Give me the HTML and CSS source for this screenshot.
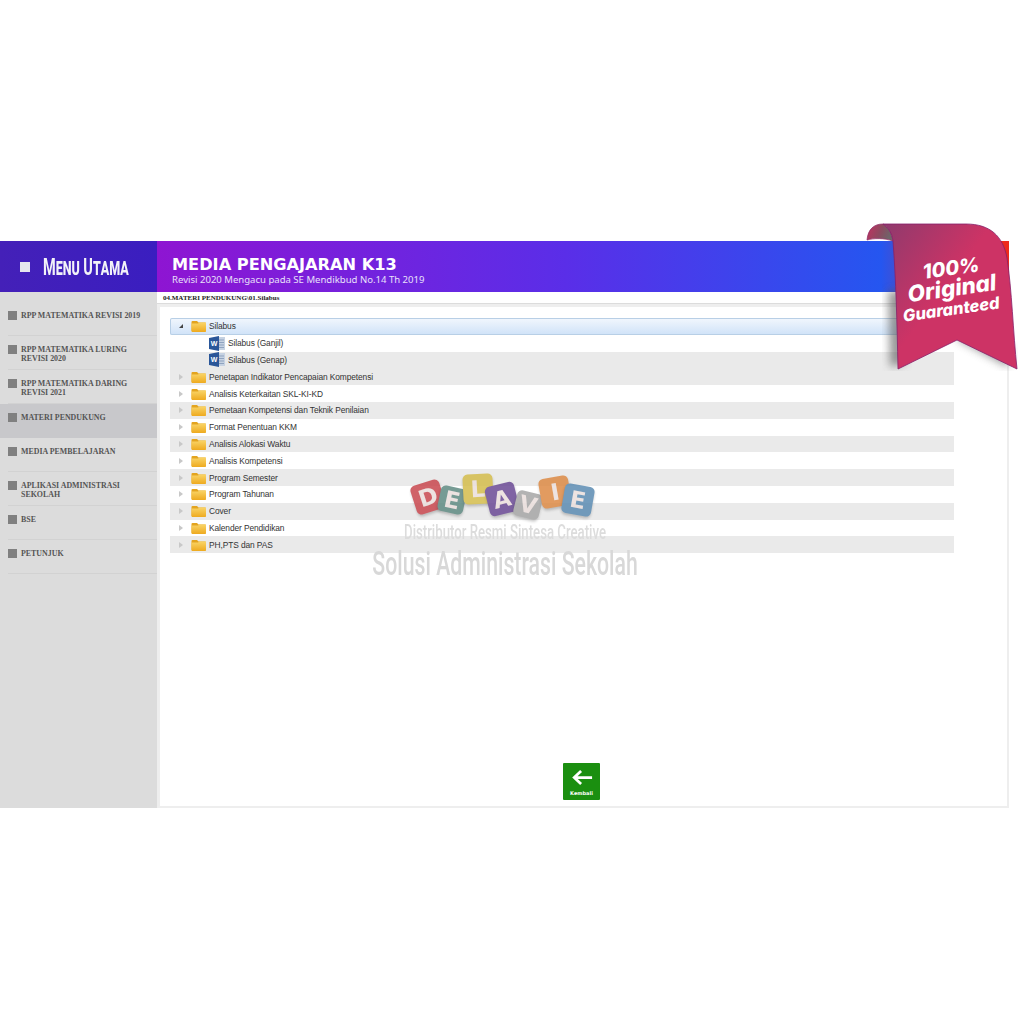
FILE: index.html
```html
<!DOCTYPE html>
<html lang="en">
<head>
  <meta charset="UTF-8" />
  <title>Media Pengajaran K13</title>
  <link rel="stylesheet" href="styles.css">
</head>
<body>
  <div class="app">
    <div class="sidebar">
      <div class="menu-title"><span class="menu-square"></span><span class="menu-text">Menu Utama</span></div>
      <div class="menu-list">
        <div class="menu-item"><span class="bullet"></span><span>RPP MATEMATIKA REVISI 2019</span></div>
        <div class="menu-item"><span class="bullet"></span><span>RPP MATEMATIKA LURING REVISI 2020</span></div>
        <div class="menu-item"><span class="bullet"></span><span>RPP MATEMATIKA DARING REVISI 2021</span></div>
        <div class="menu-item active"><span class="bullet"></span><span>MATERI PENDUKUNG</span></div>
        <div class="menu-item"><span class="bullet"></span><span>MEDIA PEMBELAJARAN</span></div>
        <div class="menu-item"><span class="bullet"></span><span>APLIKASI ADMINISTRASI SEKOLAH</span></div>
        <div class="menu-item"><span class="bullet"></span><span>BSE</span></div>
        <div class="menu-item"><span class="bullet"></span><span>PETUNJUK</span></div>
      </div>
    </div>

    <div class="main">
      <div class="header">
        <h1>MEDIA PENGAJARAN K13</h1>
        <p>Revisi 2020 Mengacu pada SE Mendikbud No.14 Th 2019</p>
      </div>
      <div class="path">04.MATERI PENDUKUNG\01.Silabus</div>
      <div class="content">
        <div class="tree">
          <div class="row selected"><span class="arrow open"></span><svg class="folder" viewBox="0 0 15 12"><use href="#folder" /></svg><span>Silabus</span></div>
          <div class="row file"><svg class="word" viewBox="0 0 16 15"><use href="#word" /></svg><span>Silabus (Ganjil)</span></div>
          <div class="row file grey"><svg class="word" viewBox="0 0 16 15"><use href="#word" /></svg><span>Silabus (Genap)</span></div>
          <div class="row grey"><span class="arrow"></span><svg class="folder" viewBox="0 0 15 12"><use href="#folder" /></svg><span>Penetapan Indikator Pencapaian Kompetensi</span></div>
          <div class="row"><span class="arrow"></span><svg class="folder" viewBox="0 0 15 12"><use href="#folder" /></svg><span>Analisis Keterkaitan SKL-KI-KD</span></div>
          <div class="row grey"><span class="arrow"></span><svg class="folder" viewBox="0 0 15 12"><use href="#folder" /></svg><span>Pemetaan Kompetensi dan Teknik Penilaian</span></div>
          <div class="row"><span class="arrow"></span><svg class="folder" viewBox="0 0 15 12"><use href="#folder" /></svg><span>Format Penentuan KKM</span></div>
          <div class="row grey"><span class="arrow"></span><svg class="folder" viewBox="0 0 15 12"><use href="#folder" /></svg><span>Analisis Alokasi Waktu</span></div>
          <div class="row"><span class="arrow"></span><svg class="folder" viewBox="0 0 15 12"><use href="#folder" /></svg><span>Analisis Kompetensi</span></div>
          <div class="row grey"><span class="arrow"></span><svg class="folder" viewBox="0 0 15 12"><use href="#folder" /></svg><span>Program Semester</span></div>
          <div class="row"><span class="arrow"></span><svg class="folder" viewBox="0 0 15 12"><use href="#folder" /></svg><span>Program Tahunan</span></div>
          <div class="row grey"><span class="arrow"></span><svg class="folder" viewBox="0 0 15 12"><use href="#folder" /></svg><span>Cover</span></div>
          <div class="row"><span class="arrow"></span><svg class="folder" viewBox="0 0 15 12"><use href="#folder" /></svg><span>Kalender Pendidikan</span></div>
          <div class="row grey"><span class="arrow"></span><svg class="folder" viewBox="0 0 15 12"><use href="#folder" /></svg><span>PH,PTS dan PAS</span></div>
        </div>
        <div class="back-box">
          <div class="back-btn">
            <svg class="back-arrow" viewBox="0 0 24 18"><path d="M11 2 L3.5 9 L11 16 M4 9 H23" /></svg>
            <span>Kembali</span>
          </div>
        </div>
      </div>
    </div>

    <!-- watermark over the tree -->
    <div class="watermark">
      <div class="blocks">
        <span class="block b1">D</span>
        <span class="block b2">E</span>
        <span class="block b3">L</span>
        <span class="block b4">A</span>
        <span class="block b5">V</span>
        <span class="block b6">I</span>
        <span class="block b7">E</span>
      </div>
      <div class="wm-line1">Distributor Resmi Sintesa Creative</div>
      <div class="wm-line2">Solusi Administrasi Sekolah</div>
    </div>

    <!-- ribbon -->
    <svg class="ribbon" viewBox="0 0 152 150">
      <defs>
        <filter id="soft" x="-30%" y="-30%" width="160%" height="160%"><feGaussianBlur stdDeviation="4" /></filter>
        <linearGradient id="fold" x1="0" y1="0" x2="1" y2="0.3">
          <stop offset="0" stop-color="#c4305f" />
          <stop offset="0.6" stop-color="#8c4a60" />
          <stop offset="1" stop-color="#6f6469" />
        </linearGradient>
        <linearGradient id="shine" x1="0" y1="0" x2="0.5" y2="0.4">
          <stop offset="0" stop-color="#8f3a6d" />
          <stop offset="1" stop-color="#cd3365" />
        </linearGradient>
      </defs>
      <path d="M22 70 L24 146 L40 142 L40 70 Z" fill="#555" opacity="0.6" filter="url(#soft)" />
      <path d="M91 118 L142 146 L146 128 L96 106 Z" fill="#555" opacity="0.6" filter="url(#soft)" />
      <path d="M1 19 C2 8 8 3 17 3 C22 6 26 12 27 20 C18 17 8 17 1 19 Z" fill="url(#fold)" stroke="#8d2463" stroke-width="0.7" />
      <path d="M17 3 C22 6 26 12 27 20 C30 60 31 100 32 148 L91 119 L151 148 C147 110 146 70 141 37 C137 15 124 3 100 3 Z" fill="url(#shine)" stroke="#86206a" stroke-width="0.8" />
      <g class="ribbon-text">
        <text x="86" y="54" text-anchor="middle" font-size="20" transform="rotate(-8 86 54)">100%</text>
        <text x="87" y="75" text-anchor="middle" font-size="22.5" transform="rotate(-8 87 75)">Original</text>
        <text x="86" y="94" text-anchor="middle" font-size="16.5" transform="rotate(-8 86 94)">Guaranteed</text>
      </g>
    </svg>
  </div>

  <svg class="defs" width="0" height="0">
    <defs>
      <linearGradient id="folderFill" x1="0" y1="0" x2="0" y2="1">
        <stop offset="0" stop-color="#f9d467" />
        <stop offset="1" stop-color="#eeaa1f" />
      </linearGradient>
      <g id="folder">
        <path d="M0.5 2 Q0.5 1 1.5 1 H6 L7.5 2.5 H14 Q15 2.5 15 3.5 V10.5 Q15 12 13.5 12 H2 Q0.5 12 0.5 10.5 Z" fill="#e3a41f" />
        <path d="M0.5 3.6 L7 3.6 L8.5 2.6 H15 V10.5 Q15 12 13.5 12 H2 Q0.5 12 0.5 10.5 Z" fill="url(#folderFill)" />
      </g>
      <g id="word">
        <rect x="5" y="1" width="11" height="13" fill="#c6d2e2" />
        <path d="M9 4 H15 M9 6.5 H15 M9 9 H15 M9 11.5 H15" stroke="#8fa3c0" stroke-width="1" />
        <path d="M0 2 L10 0 V15 L0 13 Z" fill="#2a5699" />
        <text x="5" y="10" text-anchor="middle" font-size="7" font-weight="700" fill="#fff" font-family="Liberation Sans, sans-serif">W</text>
      </g>
    </defs>
  </svg>
</body>
</html>
```

FILE: styles.css
```css
* {
  margin: 0;
  padding: 0;
  box-sizing: border-box;
}
body {
  background: white;
  padding-top: 241px;
  font-family: 'Noto Sans', sans-serif;
}
.defs {
  position: absolute;
}
.app {
  position: relative;
  display: flex;
  width: 1024px;
  height: 567px;
}

/* left menu */
.sidebar {
  width: 157px;
  background: #dcdcdc;
  flex-shrink: 0;
}
.menu-title {
  display: flex;
  align-items: center;
  height: 51px;
  padding-left: 20px;
  gap: 13px;
  background: linear-gradient(90deg, #4420b8, #3a1ec0);
}
.menu-square {
  width: 10px;
  height: 10px;
  flex-shrink: 0;
  background: #e6e6ee;
}
.menu-text {
  display: inline-block;
  color: #f2f2f8;
  font-family: 'Roboto', sans-serif;
  font-size: 24px;
  font-weight: 700;
  font-variant: small-caps;
  white-space: nowrap;
  transform: scaleX(0.605);
  transform-origin: left center;
}
.menu-list {
  padding-top: 10px;
}
.menu-item {
  display: flex;
  align-items: flex-start;
  gap: 4px;
  height: 34px;
  padding: 9px 8px 0 8px;
  font-family: 'Liberation Serif', serif;
  font-size: 7.9px;
  font-weight: 700;
  line-height: 9.4px;
  color: #555;
  position: relative;
}
.menu-item:not(.active)::after {
  content: "";
  position: absolute;
  left: 8px;
  right: 0;
  bottom: 0;
  height: 1px;
  background: #d2d2d2;
}
.menu-item.active {
  background: #c8c8cb;
}
.bullet {
  width: 9px;
  height: 9px;
  flex-shrink: 0;
  background: #808080;
}

/* right side */
.main {
  flex: 1;
  display: flex;
  flex-direction: column;
  margin-right: 15px;
  background: #eeeeee;
}
.header {
  height: 51px;
  padding: 14px 0 0 15px;
  color: white;
  background: linear-gradient(90deg, #8e15d2 0%, #5a2ee8 48%, #2556f0 85%, #ee2a1c 99%);
}
.header h1 {
  font-family: 'DejaVu Sans', sans-serif;
  font-size: 16.2px;
  font-weight: 700;
  line-height: 19px;
}
.header p {
  font-size: 9.55px;
  line-height: 11px;
  color: #e8e0fa;
}
.path {
  height: 12px;
  padding-left: 6px;
  background: white;
  border-bottom: 1px solid #dcdcdc;
  font-family: 'Liberation Serif', serif;
  font-size: 7px;
  font-weight: 700;
  line-height: 12px;
  color: #222;
}
.content {
  flex: 1;
  margin: 3px 2px 2px 3px;
  padding-top: 11px;
  background: white;
  display: flex;
  flex-direction: column;
}
.tree {
  width: 784px;
  margin-left: 10px;
}
.row {
  display: flex;
  align-items: center;
  height: 16.8px;
  padding-left: 9px;
  font-family: 'Liberation Sans', sans-serif;
  font-size: 8.4px;
  letter-spacing: -0.1px;
  color: #333;
  white-space: nowrap;
}
.row.grey {
  background: #eaeaea;
}
.row.selected {
  background: linear-gradient(180deg, #f2f7fd, #cfe2f8);
  box-shadow: inset 0 0 0 1px #b8cfe6;
  border-radius: 2px;
}
.row.file {
  padding-left: 39px;
}
.arrow {
  width: 0;
  height: 0;
  margin-right: 8px;
  border-left: 4px solid #c8c8c8;
  border-top: 3px solid transparent;
  border-bottom: 3px solid transparent;
}
.arrow.open {
  border-left: 0;
  border-top: 4px solid transparent;
  border-bottom: 0;
  border-right: 4px solid #444;
}
.folder {
  width: 15px;
  height: 12px;
  margin-right: 3px;
}
.word {
  width: 16px;
  height: 15px;
  margin-right: 3px;
}

/* back button */
.back-box {
  margin-top: auto;
  display: flex;
  justify-content: center;
  padding: 0 4px 6px 0;
}
.back-btn {
  width: 37px;
  height: 37px;
  background: #1b8f10;
  border-radius: 1px;
  color: white;
  display: flex;
  flex-direction: column;
  align-items: center;
  padding-top: 6px;
  font-family: 'DejaVu Sans', sans-serif;
  font-size: 5px;
  font-weight: 700;
}
.back-arrow {
  width: 22px;
  height: 17px;
  margin-bottom: 4px;
  fill: none;
  stroke: white;
  stroke-width: 3;
}

/* watermark */
.watermark {
  position: absolute;
  left: 365px;
  top: 232px;
  width: 280px;
  display: flex;
  flex-direction: column;
  align-items: center;
}
.blocks {
  width: 280px;
  height: 47px;
  position: relative;
  opacity: 0.85;
}
.block {
  position: absolute;
  width: 30px;
  height: 30px;
  border-radius: 5px;
  font-family: 'DejaVu Sans', sans-serif;
  font-weight: 700;
  font-size: 23px;
  line-height: 30px;
  text-align: center;
  color: #eadfdc;
  box-shadow: 0 2px 3px rgba(0, 0, 0, 0.25);
}
.b1 { left: 48px; top: 9px; background: #c8474e; transform: rotate(-18deg); }
.b2 { left: 74px; top: 14px; background: #5f8a82; transform: rotate(12deg); width: 26px; height: 26px; line-height: 26px; }
.b3 { left: 98px; top: 1px; background: #d4bd4c; transform: rotate(-3deg); }
.b4 { left: 122px; top: 11px; background: #6a4a95; transform: rotate(-14deg); }
.b5 { left: 150px; top: 19px; background: #a6a6a6; transform: rotate(14deg); width: 26px; height: 26px; line-height: 26px; }
.b6 { left: 175px; top: 4px; background: #dd8a45; transform: rotate(-10deg); }
.b7 { left: 198px; top: 12px; background: #5b8bb2; transform: rotate(10deg); }
.wm-line1 {
  flex-shrink: 0;
  font-family: 'Roboto', sans-serif;
  font-size: 20px;
  font-weight: 500;
  line-height: 24px;
  color: #dcdcdc;
  white-space: nowrap;
  transform: scaleX(0.66);
}
.wm-line2 {
  flex-shrink: 0;
  font-family: 'Roboto', sans-serif;
  font-size: 33px;
  font-weight: 500;
  line-height: 39px;
  color: #d8d8d8;
  white-space: nowrap;
  transform: scaleX(0.644);
}

/* ribbon */
.ribbon {
  position: absolute;
  left: 866px;
  top: -20px;
  width: 152px;
  height: 150px;
}
.ribbon-text text {
  font-family: 'Inter', sans-serif;
  font-weight: 800;
  font-style: italic;
  fill: white;
}
```
